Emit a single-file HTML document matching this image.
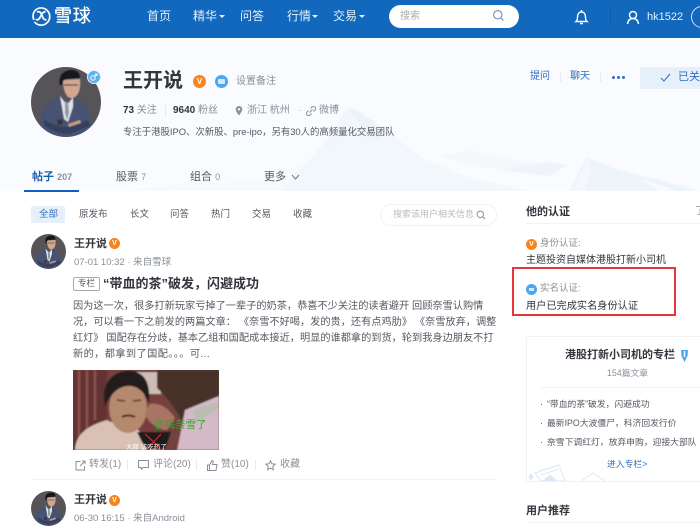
<!DOCTYPE html>
<html lang="zh"><head><meta charset="utf-8"><style>
*{margin:0;padding:0;box-sizing:border-box}
html,body{width:700px;height:529px;overflow:hidden;background:#fff}
body{position:relative;font-family:"Liberation Sans","Noto Sans CJK SC",sans-serif;color:#33353c}
.t{position:absolute;white-space:nowrap;line-height:1}
.a{position:absolute}
.v{position:absolute;border-radius:50%;background:#f5851f;color:#fff;text-align:center;font-weight:bold}
.b{position:absolute;border-radius:50%;background:#4aa8ee}
.sep{position:absolute;width:1px;background:#e6e9ee}
</style></head><body>

<svg width="0" height="0" style="position:absolute"><defs>
<filter id="bl"><feGaussianBlur stdDeviation=".5"/></filter>
<filter id="bl2"><feGaussianBlur stdDeviation=".9"/></filter>
<clipPath id="c1"><circle cx="35" cy="35" r="35"/></clipPath>
<symbol id="man" viewBox="0 0 70 70">
<g clip-path="url(#c1)"><rect width="70" height="70" fill="#565459"/>
<g filter="url(#bl)">
<path d="M9 58C10 42 15 36 29 29L36 37 44 31C53 34 58 40 60 56L60 64 36 70 14 67z" fill="#465272"/>
<path d="M29 29l7 9 6-8 0 10-5 15-4-3z" fill="#dfe1e5"/>
<path d="M34 35h3l1 11-2 7-2-7z" fill="#8f96a6"/>
<path d="M13 52c6 5 13 7 23 8l21-7 2 6-21 8c-10 0-18-3-25-9z" fill="#35405f"/>
<path d="M26 53l5-1 1 5-5 1z" fill="#3a3334"/>
<path d="M37 57l12-4 1 3-12 4z" fill="#c49b86"/>
<path d="M32 13l17-1c1 9-1 19-9 19-5 0-8-8-8-18z" fill="#d2a68f"/>
<path d="M29 18C27 8 33 3 41 3c5 0 8 3 8 8l-14 1-3 2-1 4z" fill="#17161a"/>
<path d="M33 18h14" stroke="#55484a" stroke-width="1.200"/>
</g></g></symbol>
</defs></svg>

<!-- header -->
<div class="a" style="left:0;top:0;width:700px;height:38px;background:#1168bc"></div>
<svg class="a" style="left:31px;top:6px" width="21" height="21" viewBox="0 0 21 21" fill="none" stroke="#fff" stroke-width="1.700"><path d="M4 4.500A8.600 8.600 0 1 1 3.500 16M3 14A8.600 8.600 0 0 1 4 4.500"/><path d="M6 6c3-1.500 5 2 5.500 4.500.5 2 2 4 4 3"/><path d="M14.500 5.500C12 6 10.500 8 9.500 10.500 8.500 13 6.500 15 5 13"/></svg>
<div class="t" style="left:54px;top:7px;font-size:18px;color:#fff;-webkit-text-stroke:.3px #fff;letter-spacing:.8px">雪球</div>
<div class="t" style="left:147px;top:10px;font-size:12px;color:#e6f0fa">首页</div>
<div class="t" style="left:193px;top:10px;font-size:12px;color:#e6f0fa">精华</div>
<div class="a" style="left:219px;top:15px;border:3px solid transparent;border-top:3px solid #e6f0fa"></div>
<div class="t" style="left:240px;top:10px;font-size:12px;color:#e6f0fa">问答</div>
<div class="t" style="left:287px;top:10px;font-size:12px;color:#e6f0fa">行情</div>
<div class="a" style="left:312px;top:15px;border:3px solid transparent;border-top:3px solid #e6f0fa"></div>
<div class="t" style="left:333px;top:10px;font-size:12px;color:#e6f0fa">交易</div>
<div class="a" style="left:359px;top:15px;border:3px solid transparent;border-top:3px solid #e6f0fa"></div>
<div class="a" style="left:389px;top:5px;width:130px;height:23px;border-radius:12px;background:#fff"></div>
<div class="t" style="left:400px;top:12px;font-size:10px;color:#aaa">搜索</div>
<svg class="a" style="left:492px;top:9px" width="13" height="13" viewBox="0 0 13 13" fill="none" stroke="#6f8db5" stroke-width="1.100"><circle cx="5.800" cy="5.800" r="4.200"/><path d="M9 9l2.500 2.500"/></svg>
<svg class="a" style="left:574px;top:9px" width="15" height="16" viewBox="0 0 15 16" fill="none" stroke="#fff" stroke-width="1.400"><path d="M2 12.500h11c-1.200-1-1.500-2-1.500-4.500 0-3-1.500-5-4-5s-4 2-4 5c0 2.500-.3 3.500-1.500 4.500zM6 14.500h3M7.500 1v1.500"/></svg>
<div class="a" style="left:610px;top:8px;width:1px;height:17px;background:#0f5ca6"></div>
<svg class="a" style="left:626px;top:10px" width="14" height="15" viewBox="0 0 14 15" fill="none" stroke="#fff" stroke-width="1.500"><circle cx="7" cy="5" r="3.500"/><path d="M1.500 14c.5-3.500 2.500-5.500 5.500-5.500s5 2 5.500 5.500"/></svg>
<div class="t" style="left:647px;top:12px;font-size:11px;color:#e6f0fa">hk1522</div>
<div class="a" style="left:691px;top:6px;width:22px;height:22px;border-radius:50%;border:1px solid #cfe0f2"></div>

<!-- profile banner -->
<div class="a" style="left:0;top:38px;width:700px;height:153px;background:#f9fbfe"></div>
<svg class="a" style="left:0;top:38px" width="700" height="153" viewBox="0 0 700 153">
<g filter="url(#bl)">
<path d="M130 153l60-8 60-1 50-16 20 0 0 25z" fill="#f6fafd"/>
<path d="M300 132L322 108 347 69 372 82 425 122 470 140 530 153H280z" fill="#f2f7fb"/>
<path d="M347 69l12 4 14 10 8 20-15-4-8-16z" fill="#ebf3f9"/>
<path d="M347 69l-4 20-12 20 14-8z" fill="#eff5fa"/>
<path d="M440 118l30-6 50 12 46 2-16 10-40-4-40-4z" fill="#f4f8fb"/>
<path d="M500 132l50-8 17 3-18 11z" fill="#eef4f9"/>
<path d="M570 153l10-22 7-12 28 12 40 10 45 12z" fill="#edf4fa"/>
<path d="M587 119l4 12-6 22-12 0z" fill="#f4f8fc"/>
<path d="M640 141l34 11-14 1z" fill="#f9fbfe"/>
</g>
</svg>

<!-- avatar -->
<svg class="a" style="left:31px;top:67px" width="70" height="70"><use href="#man"/></svg>
<div class="a" style="left:87px;top:70px;width:14px;height:14px;border-radius:50%;background:#58b1ec;border:1px solid #e3f1fb"></div>
<svg class="a" style="left:90px;top:73px" width="8" height="8" viewBox="0 0 8 8" fill="none" stroke="#fff" stroke-width="1"><circle cx="3" cy="5" r="2.200"/><path d="M4.500 3.500L7 1M5 1h2v2"/></svg>

<div class="t" style="left:123px;top:71px;font-size:20px;font-weight:bold;color:#33353c">王开说</div>
<div class="v" style="left:193px;top:75px;width:13px;height:13px;font-size:8px;line-height:13px">V</div>
<div class="b" style="left:215px;top:75px;width:13px;height:13px"></div>
<div class="a" style="left:218px;top:79px;width:7px;height:5px;background:#cfe8fb;border-radius:1px"></div>
<div class="t" style="left:236px;top:77px;font-size:10px;color:#8a8f99">设置备注</div>

<div class="t" style="left:123px;top:106px;font-size:10px;color:#8a8f99"><b style="color:#33353c">73</b> 关注</div>
<div class="sep" style="left:165px;top:105px;height:12px"></div>
<div class="t" style="left:173px;top:106px;font-size:10px;color:#8a8f99"><b style="color:#33353c">9640</b> 粉丝</div>
<svg class="a" style="left:235px;top:106px" width="8" height="10" viewBox="0 0 8 10" fill="#8a8f99"><path d="M4 0a3.300 3.300 0 0 0-3.300 3.300C.7 5.500 4 9.500 4 9.500s3.300-4 3.300-6.200A3.300 3.300 0 0 0 4 0zm0 4.500a1.200 1.200 0 1 1 0-2.400 1.200 1.200 0 0 1 0 2.400z"/></svg>
<div class="t" style="left:247px;top:106px;font-size:10px;color:#8a8f99">浙江 杭州</div>
<div class="t" style="left:298px;top:106px;font-size:10px;color:#b5b8bf">·</div>
<svg class="a" style="left:306px;top:106px" width="10" height="10" viewBox="0 0 10 10" fill="none" stroke="#8a8f99" stroke-width="1"><path d="M4.500 2.500l1.500-1.500a1.800 1.800 0 0 1 3 3L7.500 5.500M5.500 7.500L4 9a1.800 1.800 0 0 1-3-3l1.500-1.500M3.500 6.500l3-3"/></svg>
<div class="t" style="left:319px;top:106px;font-size:10px;color:#8a8f99">微博</div>
<div class="t" style="left:123px;top:127px;font-size:9.400px;color:#555962">专注于港股IPO、次新股、pre-ipo，另有30人的高频量化交易团队</div>

<div class="t" style="left:530px;top:72px;font-size:10px;color:#2f6fc0">提问</div>
<div class="sep" style="left:560px;top:73px;height:9px"></div>
<div class="t" style="left:570px;top:72px;font-size:10px;color:#2f6fc0">聊天</div>
<div class="sep" style="left:600px;top:73px;height:9px"></div>
<div class="a" style="left:612px;top:76px;width:3px;height:3px;border-radius:50%;background:#2f6fc0;box-shadow:5px 0 0 #2f6fc0,10px 0 0 #2f6fc0"></div>
<div class="a" style="left:640px;top:67px;width:60px;height:22px;background:#e6f0fa"></div>
<svg class="a" style="left:660px;top:73px" width="11" height="10" viewBox="0 0 11 10" fill="none" stroke="#2f6fc0" stroke-width="1"><path d="M1 5l3 3 6-7"/></svg>
<div class="t" style="left:678px;top:72px;font-size:11px;color:#2f6fc0">已关注</div>

<!-- tabs -->
<div class="t" style="left:32px;top:172px;font-size:11px;font-weight:bold;color:#1f5fae">帖子 <span style="font-size:9px;color:#8a8f99">207</span></div>
<div class="a" style="left:24px;top:190px;width:55px;height:2px;background:#0f5fc0"></div>
<div class="t" style="left:116px;top:172px;font-size:11px;color:#555962">股票 <span style="font-size:9px;color:#8a8f99">7</span></div>
<div class="t" style="left:190px;top:172px;font-size:11px;color:#555962">组合 <span style="font-size:9px;color:#8a8f99">0</span></div>
<div class="t" style="left:264px;top:172px;font-size:11px;color:#555962">更多</div>
<svg class="a" style="left:291px;top:174px" width="9" height="7" viewBox="0 0 9 7" fill="none" stroke="#777" stroke-width="1"><path d="M1 1l3.500 4L8 1"/></svg>

<!-- filters -->
<div class="a" style="left:31px;top:206px;width:34px;height:17px;background:#e6f0fa;border-radius:2px"></div>
<div class="t" style="left:39px;top:210px;font-size:9.500px;color:#2f6fc0">全部</div>
<div class="t" style="left:79px;top:210px;font-size:9.500px;color:#555962">原发布</div>
<div class="t" style="left:130px;top:210px;font-size:9.500px;color:#555962">长文</div>
<div class="t" style="left:170px;top:210px;font-size:9.500px;color:#555962">问答</div>
<div class="t" style="left:211px;top:210px;font-size:9.500px;color:#555962">热门</div>
<div class="t" style="left:252px;top:210px;font-size:9.500px;color:#555962">交易</div>
<div class="t" style="left:293px;top:210px;font-size:9.500px;color:#555962">收藏</div>
<div class="a" style="left:380px;top:204px;width:117px;height:22px;border:1px solid #f0f2f5;border-radius:11px"></div>
<div class="t" style="left:393px;top:210px;font-size:9px;color:#b8bbc2">搜索该用户相关信息</div>
<svg class="a" style="left:476px;top:210px" width="10" height="10" viewBox="0 0 10 10" fill="none" stroke="#8a8f99" stroke-width="1"><circle cx="4.300" cy="4.300" r="3.200"/><path d="M6.800 6.800L9 9"/></svg>

<!-- post 1 -->
<svg class="a" style="left:31px;top:234px" width="35" height="35"><use href="#man"/></svg>
<div class="t" style="left:74px;top:239px;font-size:11px;font-weight:bold;color:#33353c">王开说</div>
<div class="v" style="left:109px;top:238px;width:11px;height:11px;font-size:7px;line-height:11px">V</div>
<div class="t" style="left:74px;top:258px;font-size:9.500px;color:#8a8f99">07-01 10:32 · 来自雪球</div>
<div class="a" style="left:73px;top:277px;width:27px;height:14px;border:1px solid #a8abb2;border-radius:2px"></div>
<div class="t" style="left:78px;top:279px;font-size:8.500px;color:#555962">专栏</div>
<div class="t" style="left:103px;top:277px;font-size:13px;font-weight:bold;color:#33353c">“带血的茶”破发，闪避成功</div>
<div class="t" style="left:73px;top:302px;font-size:10.200px;color:#555962">因为这一次，很多打新玩家亏掉了一辈子的奶茶，恭喜不少关注的读者避开 回顾奈雪认购情</div>
<div class="t" style="left:73px;top:318px;font-size:10.200px;color:#555962">况，可以看一下之前发的两篇文章： 《奈雪不好喝，发的贵，还有点鸡肋》 《奈雪放弃，调整</div>
<div class="t" style="left:73px;top:334px;font-size:10.200px;color:#555962">红灯》 国配存在分歧，基本乙组和国配成本接近，明显的谁都拿的到货，轮到我身边朋友不打</div>
<div class="t" style="left:73px;top:350px;font-size:10.200px;letter-spacing:.4px;color:#555962">新的，都拿到了国配。。。可...</div>

<!-- image -->
<svg class="a" style="left:73px;top:370px" width="146" height="80" viewBox="0 0 146 80">
<rect width="146" height="80" fill="#74413f"/>
<g filter="url(#bl2)">
<rect x="0" y="0" width="34" height="80" fill="#633030"/>
<path d="M6 0v70M14 0v60M22 0v50" stroke="#8a5250" stroke-width="2.500"/>
<rect x="64" y="2" width="24" height="22" fill="#cdbdb6"/>
<path d="M70 24h20v40H70z" fill="#7a3c3e"/>
<path d="M2 80C3 64 14 56 34 50l14 6 18 4 8 20z" fill="#d9c2b3"/>
<ellipse cx="55" cy="38" rx="19" ry="25" fill="#b5896d"/>
<path d="M32 36C27 14 40 1 56 1c14 0 22 10 20 32-4-10-10-16-18-17-10-1-20 6-26 20z" fill="#201a1c"/>
<path d="M49 47c4-2 9-2 13 0" stroke="#3a2420" stroke-width="2" fill="none"/>
<path d="M44 30l8 1M60 31l8-1" stroke="#4a3028" stroke-width="1.500"/>
<path d="M84 0h62v38l-22 14-10 10c-4-10-14-30-30-44z" fill="#47302a"/>
<path d="M76 34c10-2 20 4 26 14l-8 12c-8 0-18-6-22-16z" fill="#a87565"/>
<path d="M112 40l34-14v54h-42z" fill="#d4bac6"/>
<path d="M120 40l26-8v6l-24 16z" fill="#a6bfa6" opacity=".6"/>
<path d="M64 62h34l-6 16H72z" fill="#1c1a1c"/>
</g>
<path d="M72 64l14 13M88 64l-12 13" stroke="#d8202a" stroke-width="1.200" fill="none"/>
<text x="81" y="58" font-size="10.500" fill="#2fa82f" font-family="Liberation Sans,Noto Sans CJK SC,sans-serif">该喝奈雪了</text>
<text x="53" y="79" font-size="6.500" fill="#fff" font-family="Liberation Sans,Noto Sans CJK SC,sans-serif">大郎 该吃药了</text>
</svg>

<!-- actions -->
<svg class="a" style="left:75px;top:460px" width="11" height="11" viewBox="0 0 11 11" fill="none" stroke="#8a8f99" stroke-width="1"><path d="M9.500 6v4h-8.500V1.500h4.500M5 6l5-5M7 1h3v3"/></svg>
<div class="t" style="left:89px;top:460px;font-size:10px;color:#8a8f99">转发(1)</div>
<div class="sep" style="left:127px;top:460px;height:10px"></div>
<svg class="a" style="left:138px;top:460px" width="11" height="10" viewBox="0 0 11 10" fill="none" stroke="#8a8f99" stroke-width="1"><path d="M.5.500h10v7H5l-1.500 2-.5-2H.5z"/></svg>
<div class="t" style="left:153px;top:460px;font-size:10px;color:#8a8f99">评论(20)</div>
<div class="sep" style="left:196px;top:460px;height:10px"></div>
<svg class="a" style="left:207px;top:460px" width="11" height="11" viewBox="0 0 11 11" fill="none" stroke="#8a8f99" stroke-width="1"><path d="M.5 5h2v5.500h-2zM2.500 5l2.500-4.500c1 0 1.500 1 1 2L5.500 4.500h4.500l-1 6H2.500"/></svg>
<div class="t" style="left:221px;top:460px;font-size:10px;color:#8a8f99">赞(10)</div>
<div class="sep" style="left:255px;top:460px;height:10px"></div>
<svg class="a" style="left:265px;top:460px" width="11" height="11" viewBox="0 0 11 11" fill="none" stroke="#8a8f99" stroke-width="1"><path d="M5.500.800l1.400 3 3.300.4-2.400 2.200.6 3.300-2.900-1.600-2.900 1.600.6-3.300L.8 4.200l3.300-.4z"/></svg>
<div class="t" style="left:280px;top:460px;font-size:10px;color:#8a8f99">收藏</div>
<div class="a" style="left:31px;top:479px;width:466px;height:1px;background:#f2f3f5"></div>

<!-- post 2 -->
<svg class="a" style="left:31px;top:491px" width="35" height="35"><use href="#man"/></svg>
<div class="t" style="left:74px;top:495px;font-size:11px;font-weight:bold;color:#33353c">王开说</div>
<div class="v" style="left:109px;top:495px;width:11px;height:11px;font-size:7px;line-height:11px">V</div>
<div class="t" style="left:74px;top:514px;font-size:9.500px;color:#8a8f99">06-30 16:15 · 来自Android</div>

<!-- sidebar -->
<div class="t" style="left:526px;top:207px;font-size:11px;font-weight:bold;color:#33353c">他的认证</div>
<div class="t" style="left:695px;top:207px;font-size:10px;color:#8a8f99">了</div>
<div class="a" style="left:526px;top:223px;width:174px;height:1px;background:#f2f3f5"></div>
<div class="v" style="left:526px;top:239px;width:11px;height:11px;font-size:7px;line-height:11px">V</div>
<div class="t" style="left:540px;top:239px;font-size:9.500px;color:#8a8f99">身份认证:</div>
<div class="t" style="left:526px;top:256px;font-size:10px;color:#33353c">主题投资自媒体港股打新小司机</div>
<div class="a" style="left:512px;top:267px;width:164px;height:49px;border:2px solid #e8343a"></div>
<div class="b" style="left:526px;top:284px;width:11px;height:11px"></div>
<div class="a" style="left:529px;top:288px;width:5px;height:3px;background:#d6ecfb"></div>
<div class="t" style="left:540px;top:284px;font-size:9.500px;color:#8a8f99">实名认证:</div>
<div class="t" style="left:526px;top:302px;font-size:10.200px;color:#33353c">用户已完成实名身份认证</div>

<div class="a" style="left:526px;top:336px;width:180px;height:146px;border:1px solid #f0f2f5"></div>
<svg class="a" style="left:527px;top:459px" width="80" height="22" viewBox="0 0 80 22" fill="none" stroke="#dde9f6" stroke-width="1"><path d="M8 14l24-8 6 16H14z"/><path d="M12 12l20-6M14 16l18-6"/><path d="M54 22l12-8 12 8"/><path d="M2 18l2-3 2 3-2 3zM16 22l7-6 7 6z" fill="#dde9f6"/></svg>
<div class="t" style="left:565px;top:350px;font-size:11px;font-weight:bold;color:#33353c">港股打新小司机的专栏</div>
<svg class="a" style="left:680px;top:350px" width="9" height="12" viewBox="0 0 9 12"><path d="M1 0h7l-.5 6L4.500 12 1.500 6z" fill="#4aa8ee"/><path d="M3.800 1h1.400v6H3.800z" fill="#fff"/></svg>
<div class="t" style="left:607px;top:369px;font-size:8.800px;color:#8a8f99">154篇文章</div>
<div class="a" style="left:540px;top:387px;width:160px;height:1px;background:#f2f3f5"></div>
<div class="t" style="left:540px;top:400px;font-size:8.800px;color:#555962">·</div><div class="t" style="left:547px;top:400px;font-size:8.800px;color:#555962">“带血的茶”破发，闪避成功</div>
<div class="t" style="left:540px;top:419px;font-size:8.800px;color:#555962">·</div><div class="t" style="left:547px;top:419px;font-size:8.800px;color:#555962">最新IPO大波僵尸，科济回发行价</div>
<div class="t" style="left:540px;top:438px;font-size:8.800px;color:#555962">·</div><div class="t" style="left:547px;top:438px;font-size:8.800px;color:#555962">奈雪下调红灯，放弃申购，迎接大部队</div>
<div class="t" style="left:607px;top:460px;font-size:8.800px;color:#2f6fc0">进入专栏&gt;</div>
<div class="t" style="left:526px;top:506px;font-size:11px;font-weight:bold;color:#33353c">用户推荐</div>
<div class="a" style="left:526px;top:522px;width:174px;height:1px;background:#f2f3f5"></div>
</body></html>
